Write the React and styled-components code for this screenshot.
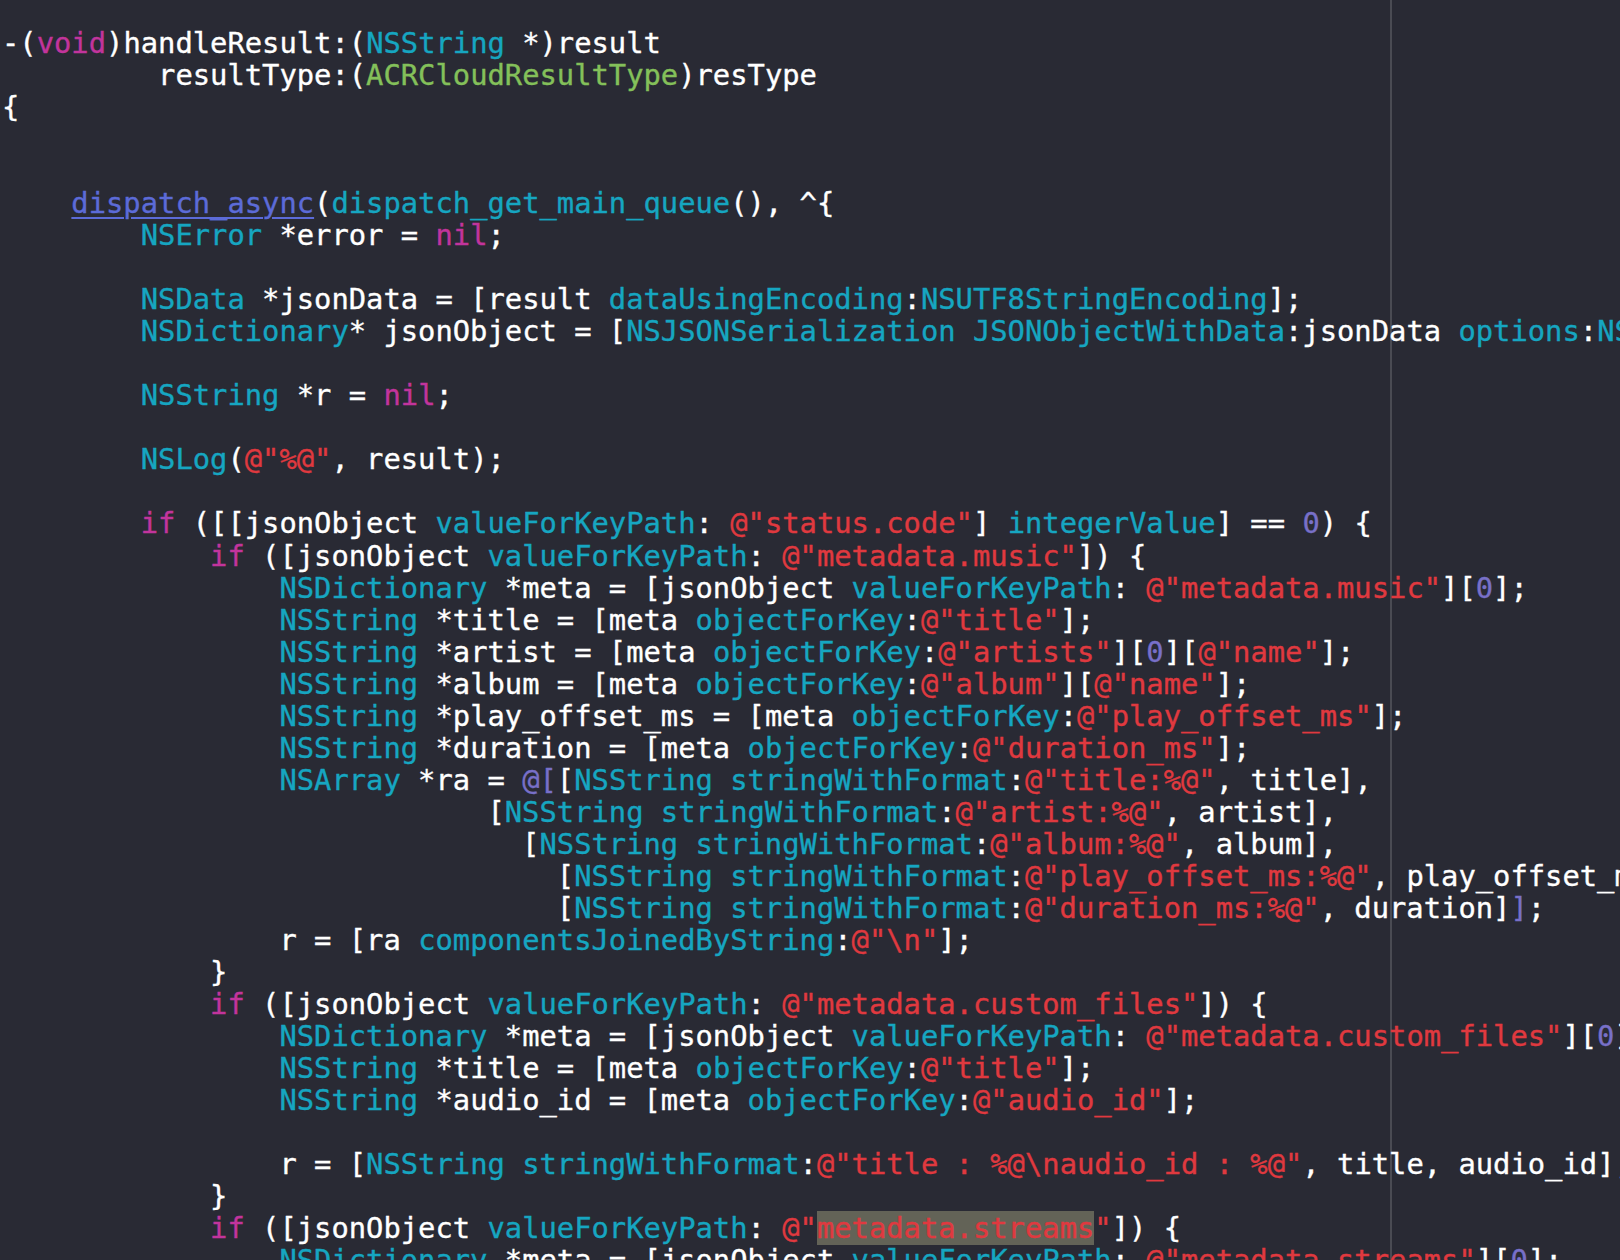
import React from 'react';
import styled, { createGlobalStyle } from 'styled-components';

// sentinel chars in the source lines:
//   ‡  -> closing bracket of an @[ ] literal (drawn like the opener)
//   «» -> find highlight inside a string
const ARRAY_CLOSE = '\u2021';

const KEYWORDS = ['void', 'nil', 'if'];
const LINKS = ['dispatch_async'];
const PROJECT_TYPES = ['ACRCloudResultType'];
const SYSTEM_NAMES = [
    'NSString', 'NSError', 'NSData', 'NSDictionary', 'NSArray', 'NSLog',
    'NSJSONSerialization', 'JSONObjectWithData', 'options', 'NSJSONReadingMutableContainers',
    'dataUsingEncoding', 'NSUTF8StringEncoding', 'valueForKeyPath', 'integerValue',
    'objectForKey', 'stringWithFormat', 'componentsJoinedByString', 'dispatch_get_main_queue'
];

const SOURCE = [
    '-(void)handleResult:(NSString *)result',
    '         resultType:(ACRCloudResultType)resType',
    '{',
    '',
    '',
    '    dispatch_async(dispatch_get_main_queue(), ^{',
    '        NSError *error = nil;',
    '',
    '        NSData *jsonData = [result dataUsingEncoding:NSUTF8StringEncoding];',
    '        NSDictionary* jsonObject = [NSJSONSerialization JSONObjectWithData:jsonData options:NSJSONReadingMutableContainers error:&error];',
    '',
    '        NSString *r = nil;',
    '',
    '        NSLog(@"%@", result);',
    '',
    '        if ([[jsonObject valueForKeyPath: @"status.code"] integerValue] == 0) {',
    '            if ([jsonObject valueForKeyPath: @"metadata.music"]) {',
    '                NSDictionary *meta = [jsonObject valueForKeyPath: @"metadata.music"][0];',
    '                NSString *title = [meta objectForKey:@"title"];',
    '                NSString *artist = [meta objectForKey:@"artists"][0][@"name"];',
    '                NSString *album = [meta objectForKey:@"album"][@"name"];',
    '                NSString *play_offset_ms = [meta objectForKey:@"play_offset_ms"];',
    '                NSString *duration = [meta objectForKey:@"duration_ms"];',
    '                NSArray *ra = @[[NSString stringWithFormat:@"title:%@", title],',
    '                            [NSString stringWithFormat:@"artist:%@", artist],',
    '                              [NSString stringWithFormat:@"album:%@", album],',
    '                                [NSString stringWithFormat:@"play_offset_ms:%@", play_offset_ms],',
    '                                [NSString stringWithFormat:@"duration_ms:%@", duration]' + ARRAY_CLOSE + ';',
    '                r = [ra componentsJoinedByString:@"\\n"];',
    '            }',
    '            if ([jsonObject valueForKeyPath: @"metadata.custom_files"]) {',
    '                NSDictionary *meta = [jsonObject valueForKeyPath: @"metadata.custom_files"][0];',
    '                NSString *title = [meta objectForKey:@"title"];',
    '                NSString *audio_id = [meta objectForKey:@"audio_id"];',
    '',
    '                r = [NSString stringWithFormat:@"title : %@\\naudio_id : %@", title, audio_id];',
    '            }',
    '            if ([jsonObject valueForKeyPath: @"«metadata.streams»"]) {',
    '                NSDictionary *meta = [jsonObject valueForKeyPath: @"metadata.streams"][0];',
    '        }'
];

const COLORS = {
    plain: '#ffffff',
    keyword: '#c2349c',
    system: '#16a6c1',
    project: '#84c05a',
    string: '#e0393f',
    number: '#7870c8',
    link: '#5c6bd8'
};

const GlobalStyle = createGlobalStyle`
    html, body {
        margin: 0;
        padding: 0;
        background: #292a34;
        overflow: hidden;
    }
`;

const Editor = styled.div`
    box-sizing: border-box;
    width: 100vw;
    height: 1260px;
    padding: 27px 0 0 2px;
    overflow: hidden;
    background-color: #292a34;
    /* page guide at column 80 */
    background-image: linear-gradient(
        to right,
        transparent 1390px,
        #4a4b53 1390px,
        #4a4b53 1392px,
        transparent 1392px
    );
    font-family: "DejaVu Sans Mono", "Liberation Mono", monospace;
    font-size: 28.8px;
    line-height: 32.04px;
    color: ${COLORS.plain};
    -webkit-text-stroke: 0.35px currentColor;
`;

const Line = styled.div`
    height: 32.04px;
    white-space: pre;
`;

const Token = styled.span`
    color: ${props => COLORS[props.$kind] || COLORS.plain};
`;

const LinkToken = styled.span`
    color: ${COLORS.link};
    text-decoration: underline;
    text-decoration-thickness: 2px;
    text-underline-offset: 4px;
`;

const Highlight = styled.span`
    background: #636357;
`;

const TOKEN_RE = /(@"(?:[^"\\]|\\.)*")|(@\[|\u2021)|([A-Za-z_]\w*)|(\d+)|([^A-Za-z_\d@\u2021]+|@)/g;

const classify = word => {
    if (KEYWORDS.includes(word)) return 'keyword';
    if (LINKS.includes(word)) return 'link';
    if (PROJECT_TYPES.includes(word)) return 'project';
    if (SYSTEM_NAMES.includes(word)) return 'system';
    return 'plain';
};

const renderString = (text, key) => {
    const match = text.match(/^(.*)«(.*)»(.*)$/);
    if (!match) return <Token key={key} $kind="string">{text}</Token>;
    return (
        <Token key={key} $kind="string">
            {match[1]}<Highlight>{match[2]}</Highlight>{match[3]}
        </Token>
    );
};

const tokenize = line => {
    const out = [];
    let m;
    let i = 0;
    TOKEN_RE.lastIndex = 0;
    while ((m = TOKEN_RE.exec(line)) !== null) {
        const key = i++;
        if (m[1]) {
            out.push(renderString(m[1], key));
        } else if (m[2]) {
            out.push(<Token key={key} $kind="number">{m[2] === ARRAY_CLOSE ? ']' : m[2]}</Token>);
        } else if (m[3]) {
            const kind = classify(m[3]);
            out.push(kind === 'link'
                ? <LinkToken key={key}>{m[3]}</LinkToken>
                : <Token key={key} $kind={kind}>{m[3]}</Token>);
        } else if (m[4]) {
            out.push(<Token key={key} $kind="number">{m[4]}</Token>);
        } else {
            out.push(<Token key={key} $kind="plain">{m[5]}</Token>);
        }
    }
    return out;
};

export default function App() {
    return (
        <>
            <GlobalStyle />
            <Editor>
                {SOURCE.map((line, idx) => (
                    <Line key={idx}>{line ? tokenize(line) : ' '}</Line>
                ))}
            </Editor>
        </>
    );
}
